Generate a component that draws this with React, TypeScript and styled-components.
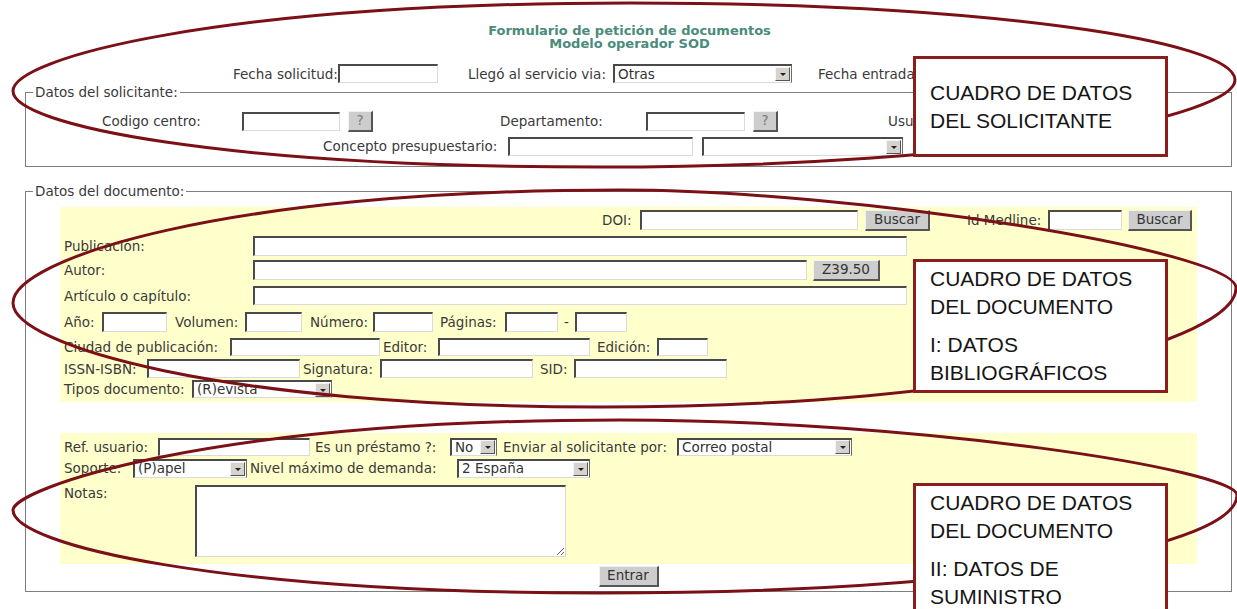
import styled, { createGlobalStyle } from 'styled-components';

const GlobalStyle = createGlobalStyle`
  html, body {
    margin: 0;
    padding: 0;
    background: #fff;
  }
  body {
    font-family: "DejaVu Sans", Verdana, sans-serif;
    font-size: 13.5px;
    color: #3a3a3a;
  }
  * {
    box-sizing: border-box;
  }
`;

const Page = styled.div`
  position: relative;
  width: 1237px;
  height: 609px;
  overflow: hidden;
  background: #fff;
`;

const Title = styled.div`
  padding: 24px 0 0 22px;
  text-align: center;
  font-weight: bold;
  font-size: 13px;
  line-height: 13px;
  color: #4a8b7b;
`;

const Row = styled.div<{
  $h: number;
  $pl?: number;
  $mt?: number;
  $justify?: 'flex-start' | 'flex-end' | 'center';
  $top?: boolean;
}>`
  display: flex;
  align-items: ${(p) => (p.$top ? 'flex-start' : 'center')};
  justify-content: ${(p) => p.$justify ?? 'flex-start'};
  height: ${(p) => p.$h}px;
  margin-top: ${(p) => p.$mt ?? 0}px;
  padding-left: ${(p) => p.$pl ?? 0}px;
  white-space: nowrap;
`;

const Label = styled.span<{ $w?: number; $ml?: number; $center?: boolean }>`
  flex: none;
  width: ${(p) => (p.$w ? `${p.$w}px` : 'auto')};
  margin-left: ${(p) => p.$ml ?? 0}px;
  text-align: ${(p) => (p.$center ? 'center' : 'left')};
  line-height: 16px;
  color: #3a3a3a;
`;

const Field = styled.input<{ $w: number; $ml?: number; $h?: number }>`
  flex: none;
  width: ${(p) => p.$w}px;
  height: ${(p) => p.$h ?? 19}px;
  margin: 0 0 0 ${(p) => p.$ml ?? 0}px;
  padding: 0 3px;
  background: #fff;
  border-style: solid;
  border-width: 2px 1px 1px 2px;
  border-color: #4a4a4a #dadada #dadada #4a4a4a;
  font: 13.5px "DejaVu Sans", Verdana, sans-serif;
  color: #333;
  outline: none;
`;

const SelectBox = styled.div<{ $w: number; $ml?: number; $h?: number }>`
  flex: none;
  display: flex;
  align-items: center;
  justify-content: space-between;
  width: ${(p) => p.$w}px;
  height: ${(p) => p.$h ?? 19}px;
  margin-left: ${(p) => p.$ml ?? 0}px;
  padding: 0 1px 0 3px;
  background: #fff;
  border-style: solid;
  border-width: 2px 1px 1px 2px;
  border-color: #4a4a4a #6a6a6a #dadada #4a4a4a;
  color: #333;
  line-height: 15px;
  overflow: hidden;
`;

const Arrow = styled.span`
  flex: none;
  position: relative;
  width: 15px;
  height: 14px;
  background: #d6d3ce;
  border-style: solid;
  border-width: 1px;
  border-color: #f5f5f5 #555 #555 #f5f5f5;
  &::after {
    content: '';
    position: absolute;
    left: 50%;
    top: 50%;
    margin: -1px 0 0 -3px;
    border-left: 3px solid transparent;
    border-right: 3px solid transparent;
    border-top: 3px solid #222;
  }
`;

const Btn = styled.button<{ $w: number; $ml?: number; $muted?: boolean }>`
  flex: none;
  width: ${(p) => p.$w}px;
  height: 21px;
  margin: 0 0 0 ${(p) => p.$ml ?? 0}px;
  padding: 0;
  background: #cdcdcd;
  border-style: solid;
  border-width: 1px 2px 2px 1px;
  border-color: #f2f2f2 #555 #555 #f2f2f2;
  font: 13.5px "DejaVu Sans", Verdana, sans-serif;
  color: ${(p) => (p.$muted ? '#7a7a7a' : '#333')};
  line-height: 17px;
`;

const Fieldset = styled.fieldset<{ $mt: number }>`
  margin: ${(p) => p.$mt}px 5px 0 25px;
  padding: 0 34px 0 0;
  border: 1px solid #7d7d7d;
  min-width: 0;
`;

const Legend = styled.legend`
  margin-left: 7px;
  padding: 0 2px;
  line-height: 16px;
  color: #3a3a3a;
`;

const Panel = styled.div<{ $mt: number; $pt?: number; $pb?: number }>`
  margin: ${(p) => p.$mt}px 0 0 34px;
  padding: ${(p) => p.$pt ?? 0}px 5px ${(p) => p.$pb ?? 3}px 4px;
  background: #ffffcc;
`;

const Notes = styled.textarea`
  flex: none;
  width: 371px;
  height: 72px;
  margin: 0;
  padding: 2px;
  background: #fff;
  border-style: solid;
  border-width: 2px 1px 1px 2px;
  border-color: #4a4a4a #dadada #dadada #4a4a4a;
  font: 13.5px "DejaVu Sans", Verdana, sans-serif;
  outline: none;
`;

const Overlay = styled.svg`
  position: absolute;
  left: 0;
  top: 0;
  pointer-events: none;
`;

const Callout = styled.div<{ $top: number; $h: number }>`
  position: absolute;
  left: 913px;
  top: ${(p) => p.$top}px;
  width: 255px;
  height: ${(p) => p.$h}px;
  display: flex;
  flex-direction: column;
  justify-content: center;
  padding-left: 14px;
  background: #fff;
  border: 3px solid #8c1d1d;
  font-family: "Liberation Sans", Arial, sans-serif;
  font-size: 21px;
  line-height: 28px;
  color: #151515;
`;

const CalloutText = styled.p`
  margin: 0;
  & + & {
    margin-top: 10px;
  }
`;

function Select({ value, w, ml, h }: { value: string; w: number; ml?: number; h?: number }) {
  return (
    <SelectBox $w={w} $ml={ml} $h={h}>
      <span>{value}</span>
      <Arrow />
    </SelectBox>
  );
}

const ellipses = [
  'M 13 91 C 13 58, 220 3, 630 3 C 980 3, 1235 40, 1235 80 C 1235 115, 1000 167, 600 167 C 220 167, 13 125, 13 91 Z',
  'M 13 303 C 13 260, 220 190, 620 190 C 850 190, 1236 250, 1236 288 C 1236 340, 1000 407, 600 407 C 220 407, 13 345, 13 303 Z',
  'M 13 510 C 13 490, 200 420, 620 420 C 920 420, 1237 470, 1237 495 C 1237 545, 1000 593, 600 593 C 220 593, 13 545, 13 510 Z',
];

export default function App() {
  return (
    <>
      <GlobalStyle />
      <Page>
        <Title>
          Formulario de petición de documentos
          <br />
          Modelo operador SOD
        </Title>

        <Row $h={21} $mt={13} $pl={233}>
          <Label $w={105}>Fecha solicitud:</Label>
          <Field $w={100} />
          <Label $ml={30} $w={145}>Llegó al servicio via:</Label>
          <Select value="Otras" w={179} />
          <Label $ml={26} $w={105}>Fecha entrada:</Label>
          <Field $w={100} />
        </Row>

        <Fieldset $mt={0}>
          <Legend>Datos del solicitante:</Legend>
          <Row $h={22} $mt={10} $pl={76}>
            <Label $w={140}>Codigo centro:</Label>
            <Field $w={98} />
            <Btn $w={25} $ml={8} $muted>?</Btn>
            <Label $ml={127} $w={146}>Departamento:</Label>
            <Field $w={99} />
            <Btn $w={25} $ml={8} $muted>?</Btn>
            <Label $ml={110} $w={70}>Usuario:</Label>
            <Field $w={100} />
          </Row>
          <Row $h={22} $mt={3} $pl={297}>
            <Label $w={185}>Concepto presupuestario:</Label>
            <Field $w={185} />
            <Select value="" w={201} ml={9} />
          </Row>
          <Row $h={9} />
        </Fieldset>

        <Fieldset $mt={16}>
          <Legend>Datos del documento:</Legend>
          <Panel $mt={8}>
            <Row $h={26} $justify="flex-end">
              <Label $w={38}>DOI:</Label>
              <Field $w={218} $h={20} />
              <Btn $w={65} $ml={7}>Buscar</Btn>
              <Label $ml={37} $w={81}>Id Medline:</Label>
              <Field $w={74} $h={20} />
              <Btn $w={64} $ml={6}>Buscar</Btn>
            </Row>
            <Row $h={25}>
              <Label $w={189}>Publicación:</Label>
              <Field $w={654} $h={20} />
            </Row>
            <Row $h={24}>
              <Label $w={189}>Autor:</Label>
              <Field $w={554} $h={20} />
              <Btn $w={67} $ml={6}>Z39.50</Btn>
            </Row>
            <Row $h={27}>
              <Label $w={189}>Artículo o capítulo:</Label>
              <Field $w={654} />
            </Row>
            <Row $h={26}>
              <Label $w={38}>Año:</Label>
              <Field $w={65} $h={20} />
              <Label $ml={8} $w={70}>Volumen:</Label>
              <Field $w={57} $h={20} />
              <Label $ml={8} $w={63}>Número:</Label>
              <Field $w={60} $h={20} />
              <Label $ml={7} $w={65}>Páginas:</Label>
              <Field $w={53} $h={20} />
              <Label $w={17} $center>-</Label>
              <Field $w={52} $h={20} />
            </Row>
            <Row $h={23}>
              <Label $w={166}>Ciudad de publicación:</Label>
              <Field $w={150} $h={18} />
              <Label $ml={3} $w={55}>Editor:</Label>
              <Field $w={152} $h={18} />
              <Label $ml={7} $w={60}>Edición:</Label>
              <Field $w={51} $h={18} />
            </Row>
            <Row $h={21}>
              <Label $w={83}>ISSN-ISBN:</Label>
              <Field $w={153} />
              <Label $ml={3} $w={77}>Signatura:</Label>
              <Field $w={153} />
              <Label $ml={7} $w={34}>SID:</Label>
              <Field $w={153} />
            </Row>
            <Row $h={20}>
              <Label $w={128}>Tipos documento:</Label>
              <Select value="(R)evista" w={140} h={18} />
            </Row>
          </Panel>

          <Panel $mt={31} $pt={2} $pb={7}>
            <Row $h={23}>
              <Label $w={94}>Ref. usuario:</Label>
              <Field $w={152} $h={18} />
              <Label $ml={5} $w={135}>Es un préstamo ?:</Label>
              <Select value="No" w={47} h={18} />
              <Label $ml={6} $w={174}>Enviar al solicitante por:</Label>
              <Select value="Correo postal" w={175} h={18} />
            </Row>
            <Row $h={20}>
              <Label $w={69}>Soporte:</Label>
              <Select value="(P)apel" w={114} h={19} />
              <Label $ml={3} $w={207}>Nivel máximo de demanda:</Label>
              <Select value="2 España" w={133} h={19} />
            </Row>
            <Row $h={72} $mt={7} $top>
              <Label $w={131}>Notas:</Label>
              <Notes />
            </Row>
          </Panel>

          <Row $h={22} $mt={1} $justify="center">
            <Btn $w={60} $ml={34}>Entrar</Btn>
          </Row>
          <Row $h={4} />
        </Fieldset>

        <Overlay width={1237} height={609} viewBox="0 0 1237 609">
          {ellipses.map((d) => (
            <path key={d} d={d} fill="none" stroke="#7b1116" strokeWidth={3} />
          ))}
        </Overlay>

        <Callout $top={56} $h={101}>
          <CalloutText>
            CUADRO DE DATOS
            <br />
            DEL SOLICITANTE
          </CalloutText>
        </Callout>
        <Callout $top={259} $h={134}>
          <CalloutText>
            CUADRO DE DATOS
            <br />
            DEL DOCUMENTO
          </CalloutText>
          <CalloutText>
            I: DATOS
            <br />
            BIBLIOGRÁFICOS
          </CalloutText>
        </Callout>
        <Callout $top={483} $h={134}>
          <CalloutText>
            CUADRO DE DATOS
            <br />
            DEL DOCUMENTO
          </CalloutText>
          <CalloutText>
            II: DATOS DE
            <br />
            SUMINISTRO
          </CalloutText>
        </Callout>
      </Page>
    </>
  );
}
